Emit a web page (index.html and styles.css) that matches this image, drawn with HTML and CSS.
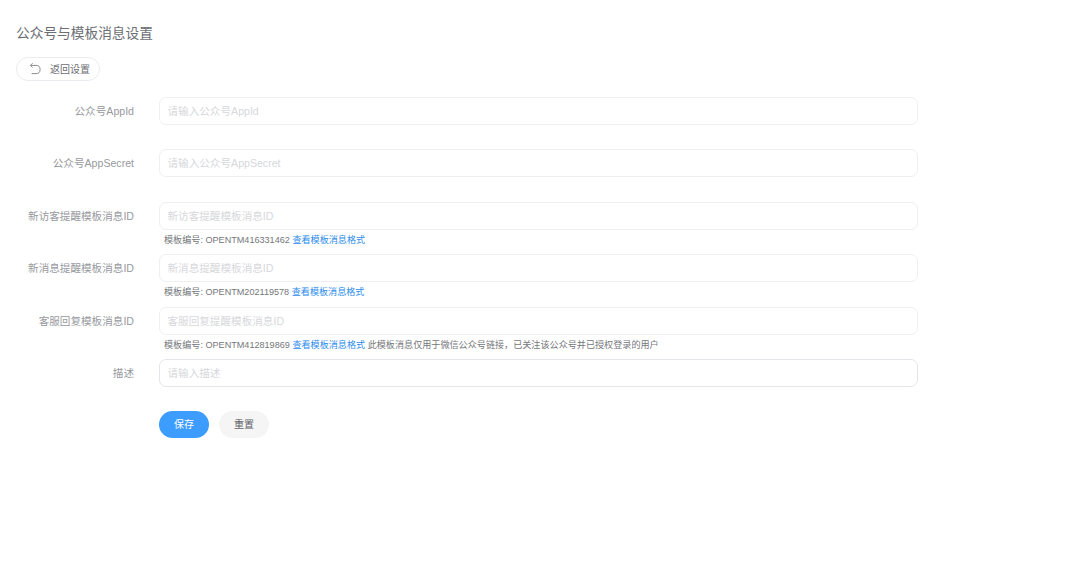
FILE: index.html
```html
<!DOCTYPE html>
<html lang="zh-CN">
<head>
  <meta charset="UTF-8" />
  <title>公众号与模板消息设置</title>
  <link rel="stylesheet" href="styles.css">
</head>
<body>
  <div class="page">
    <h2 class="page-title">公众号与模板消息设置</h2>

    <button class="back-btn">
      <svg class="back-icon" width="14" height="14" viewBox="0 0 14 14" fill="none">
        <path d="M4.6 1.2 L2.4 3.4 L4.6 5.4 M2.6 3.4 H8 A4 4 0 0 1 8 11.6 H3.6" stroke="#8c8c8c" stroke-width="1" />
      </svg>
      <span class="back-text">返回设置</span>
    </button>

    <form class="form">
      <div class="form-row">
        <label class="form-label">公众号AppId</label>
        <div class="form-field">
          <input class="form-input" placeholder="请输入公众号AppId">
        </div>
      </div>

      <div class="form-row">
        <label class="form-label">公众号AppSecret</label>
        <div class="form-field">
          <input class="form-input" placeholder="请输入公众号AppSecret">
        </div>
      </div>

      <div class="form-row">
        <label class="form-label">新访客提醒模板消息ID</label>
        <div class="form-field">
          <input class="form-input" placeholder="新访客提醒模板消息ID">
          <p class="form-tip">模板编号: OPENTM416331462 <a href="#">查看模板消息格式</a></p>
        </div>
      </div>

      <div class="form-row">
        <label class="form-label">新消息提醒模板消息ID</label>
        <div class="form-field">
          <input class="form-input" placeholder="新消息提醒模板消息ID">
          <p class="form-tip">模板编号: OPENTM202119578 <a href="#">查看模板消息格式</a></p>
        </div>
      </div>

      <div class="form-row">
        <label class="form-label">客服回复模板消息ID</label>
        <div class="form-field">
          <input class="form-input" placeholder="客服回复提醒模板消息ID">
          <p class="form-tip">模板编号: OPENTM412819869 <a href="#">查看模板消息格式</a> 此模板消息仅用于微信公众号链接，已关注该公众号并已授权登录的用户</p>
        </div>
      </div>

      <div class="form-row">
        <label class="form-label">描述</label>
        <div class="form-field">
          <input class="form-input form-input-dark" placeholder="请输入描述">
        </div>
      </div>

      <div class="form-actions">
        <button type="button" class="btn btn-primary">保存</button>
        <button type="button" class="btn btn-plain">重置</button>
      </div>
    </form>
  </div>
</body>
</html>
```

FILE: styles.css
```css
* {
  box-sizing: border-box;
}

body {
  margin: 0;
  background: #fff;
  color: #606266;
  font-family: "Liberation Sans", "Noto Sans CJK SC", sans-serif;
}

.page {
  padding: 25px 16px 0;
}

.page-title {
  margin: 0;
  height: 18px;
  line-height: 18px;
  font-size: 13.7px;
  font-weight: 400;
  color: #6b6e73;
}

.back-btn {
  display: flex;
  align-items: center;
  width: 84px;
  height: 24px;
  margin-top: 14px;
  padding: 0 0 2px 11px;
  background: #fff;
  border: 1px solid #ebecef;
  border-radius: 12px;
  font-family: inherit;
  font-size: 10px;
  color: #6b6e73;
}

.back-icon {
  margin: 2px 8px 0 0;
}

.form {
  margin-top: 15.5px;
  width: 902px;
}

.form-row {
  display: flex;
  height: 52.5px;
}

.form-label {
  flex: none;
  width: 118px;
  height: 28px;
  line-height: 29px;
  text-align: right;
  font-size: 10.6px;
  color: #97999e;
}

.form-field {
  flex: 1;
  margin-left: 25px;
}

.form-input {
  display: block;
  width: 100%;
  height: 28px;
  padding: 0 7.5px;
  background: #fff;
  border: 1px solid #eeeff1;
  border-radius: 7px;
  outline: none;
  font-family: inherit;
  font-size: 10.6px;
}

.form-input-dark {
  border-color: #e4e5e8;
}

.form-input::placeholder {
  color: #d6d8db;
}

.form-tip {
  margin: 4px 0 0 5px;
  line-height: 13px;
  font-size: 9.1px;
  color: #75777c;
  white-space: nowrap;
}

.form-tip a {
  color: #2d8ceb;
  text-decoration: none;
}

.form-actions {
  display: flex;
  gap: 10px;
  margin: -1px 0 0 143px;
}

.btn {
  width: 50px;
  height: 27px;
  padding: 0 0 1px;
  border: none;
  border-radius: 14px;
  font-family: inherit;
  font-size: 10px;
}

.btn-primary {
  background: #3c9cff;
  color: #fff;
}

.btn-plain {
  background: #f5f5f6;
  color: #606266;
}
```
